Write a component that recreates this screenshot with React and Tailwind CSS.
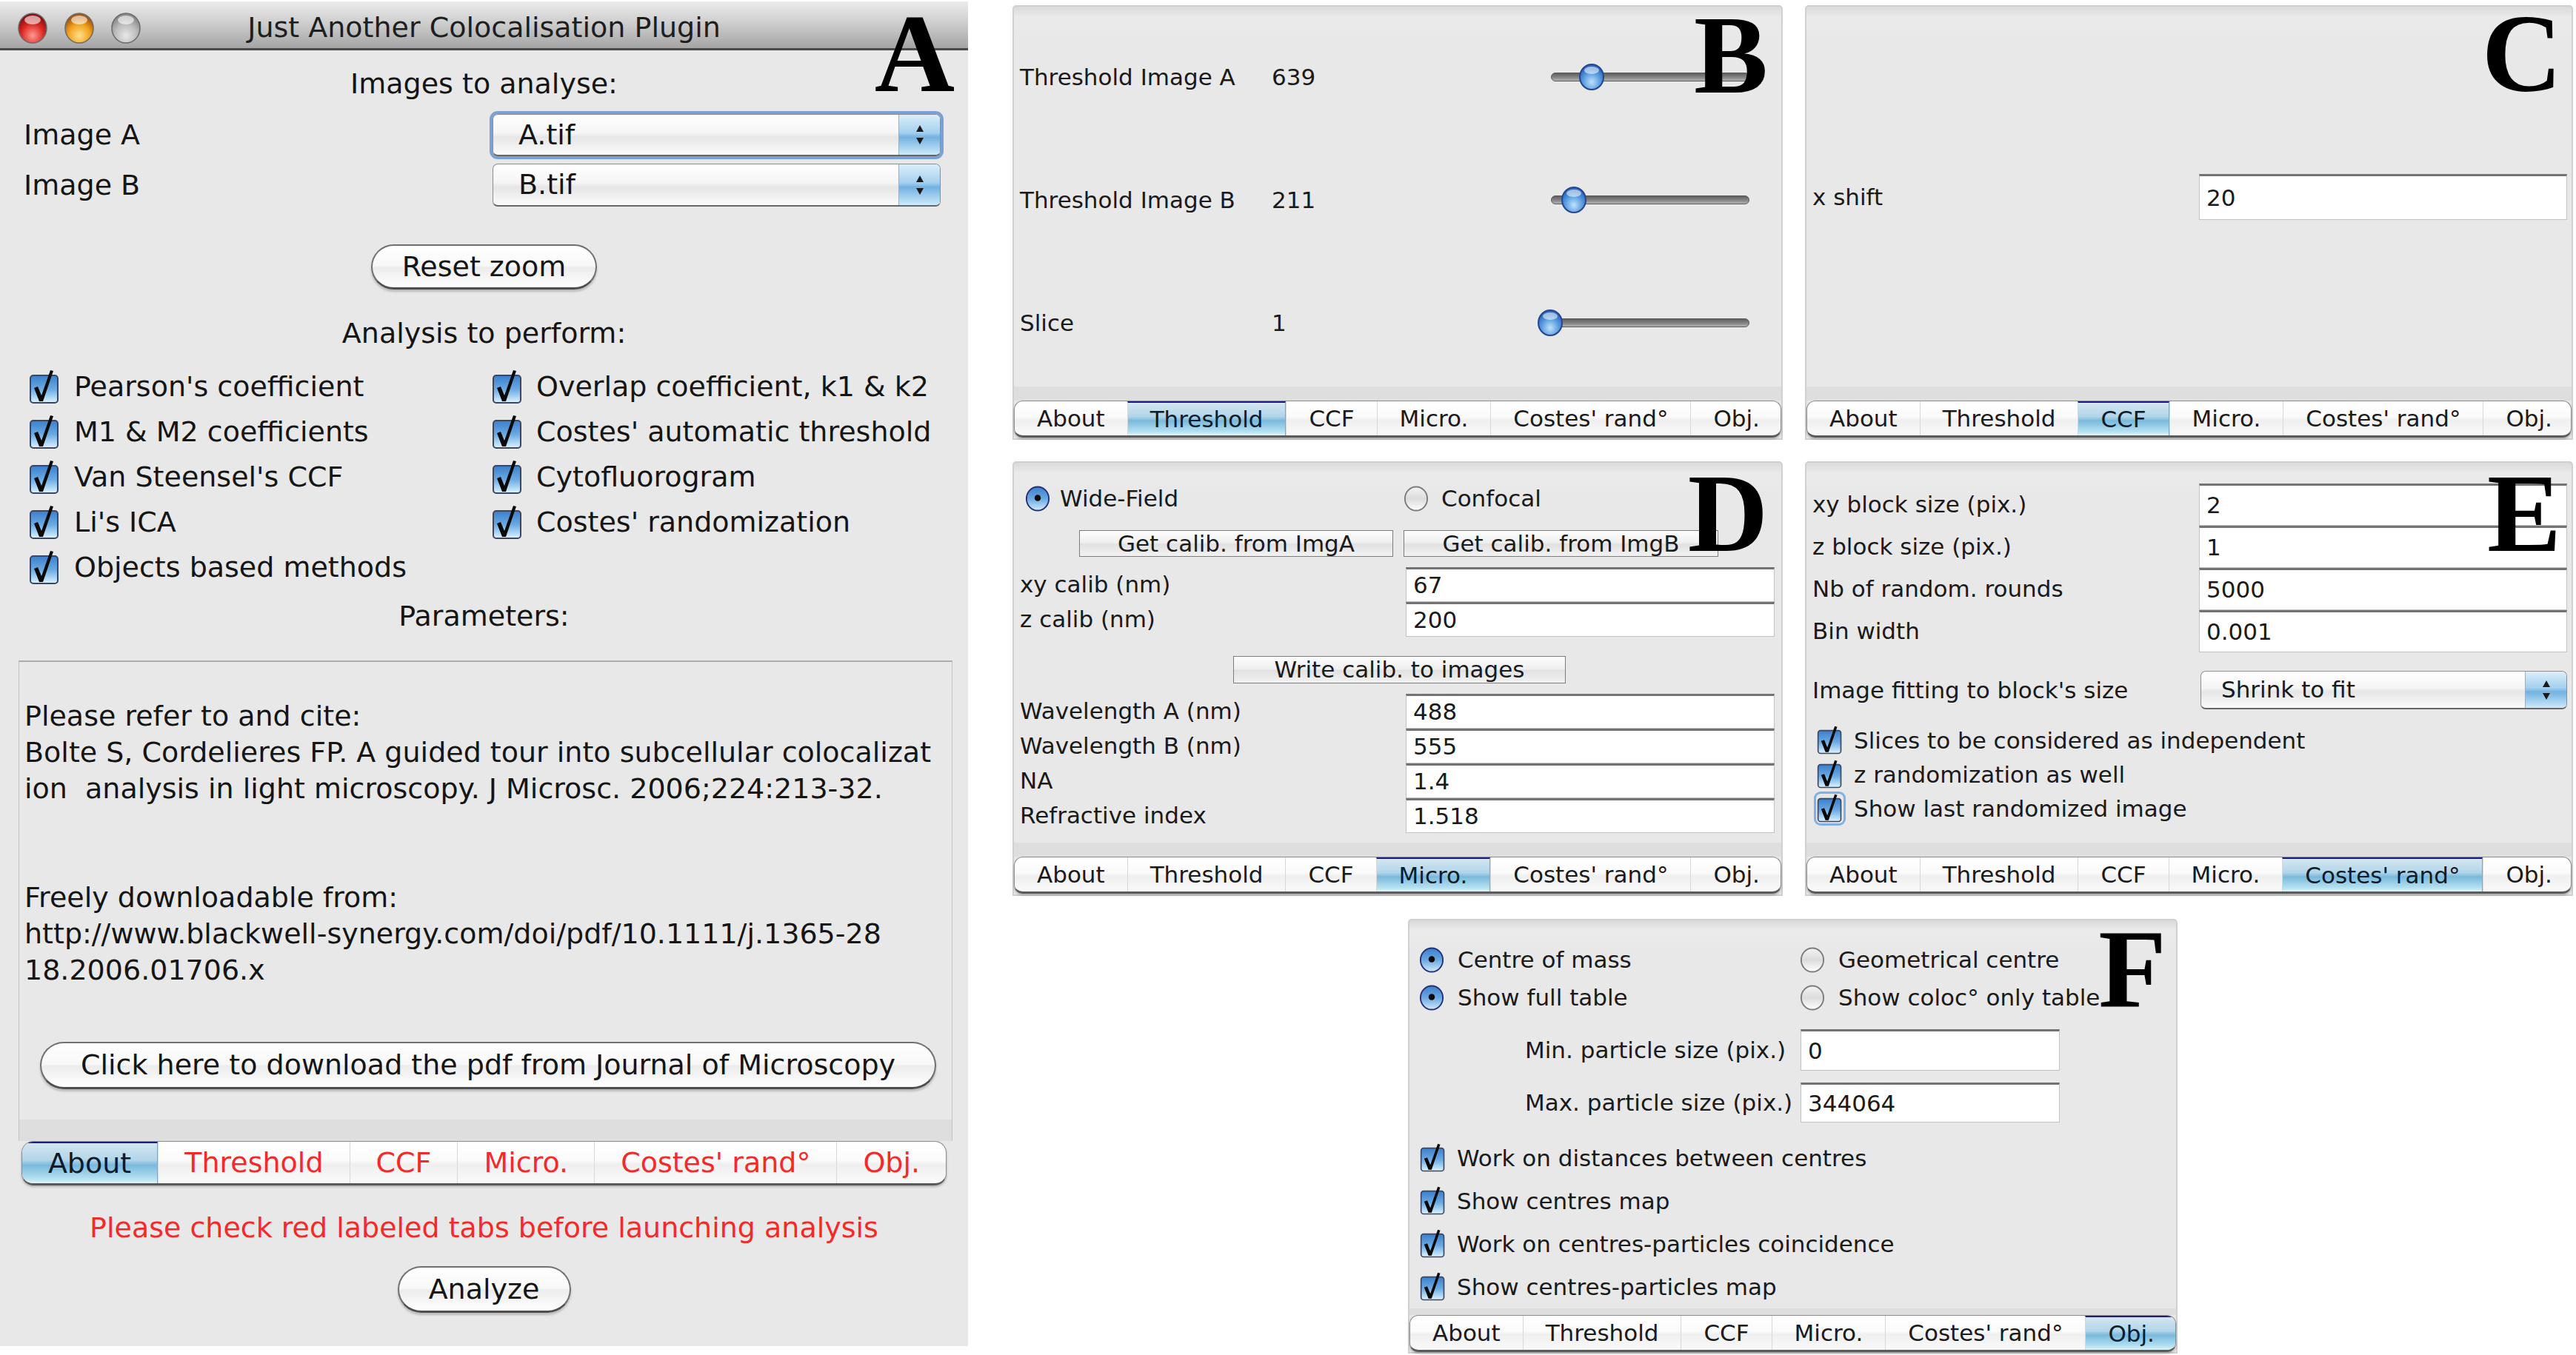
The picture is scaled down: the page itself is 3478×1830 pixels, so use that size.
import React from 'react';

const TABS = ['About', 'Threshold', 'CCF', 'Micro.', "Costes' rand°", 'Obj.'];

function TabBar({ active, big, red }) {
  return (
    <div
      className={`flex overflow-hidden whitespace-nowrap border border-[#8c8c8c] border-b-[3px] border-b-[#5a5a5a] bg-[linear-gradient(180deg,#ffffff_0%,#fbfbfb_45%,#efefef_55%,#fafafa_100%)] shadow-[0_2px_3px_rgba(0,0,0,0.25)] ${
        big ? 'h-[60px] rounded-[16px] text-[38px]' : 'h-[50px] rounded-[12px] text-[31px]'
      }`}
    >
      {TABS.map((t, i) => {
        const on = t === active;
        return (
          <div
            key={t}
            className={`flex shrink-0 items-center whitespace-nowrap ${big ? 'px-[35px]' : 'px-[30px]'} ${i > 0 ? 'border-l border-[#d8d8d8]' : ''} ${
              on
                ? 'border-t-2 border-t-[#1b1b86] border-r border-r-[#7fa9c6] bg-[linear-gradient(180deg,#d3e6f1_0%,#b2d5e9_42%,#79b9db_55%,#b4e0f1_88%,#dcf5f9_100%)] text-[#0d1b2a]'
                : red
                ? 'text-[#f42a2a]'
                : 'text-[#1a1a1a]'
            }`}
          >
            {t}
          </div>
        );
      })}
    </div>
  );
}

function Check({ className }) {
  return (
    <svg viewBox="0 0 44 48" className={className}>
      <defs>
        <linearGradient id="chk" x1="0" y1="0" x2="0" y2="1">
          <stop offset="0" stopColor="#3b7fcb" />
          <stop offset="0.5" stopColor="#6aa9e2" />
          <stop offset="0.85" stopColor="#b9def8" />
          <stop offset="1" stopColor="#e2f3fd" />
        </linearGradient>
      </defs>
      <rect x="3" y="8" width="37" height="37" rx="4" fill="url(#chk)" stroke="#3d4660" strokeWidth="2" />
      <path d="M8 25 L13 23 L18 35 L30 1 L34 2 L20 43 L15 43 Z" fill="#0a0a0a" />
    </svg>
  );
}

function Radio({ on, className }) {
  return (
    <svg viewBox="0 0 36 38" className={className}>
      <defs>
        <linearGradient id="radOn" x1="0" y1="0" x2="0" y2="1">
          <stop offset="0" stopColor="#3d7ecb" />
          <stop offset="0.5" stopColor="#6aa8e0" />
          <stop offset="1" stopColor="#d4ecfb" />
        </linearGradient>
        <linearGradient id="radOff" x1="0" y1="0" x2="0" y2="1">
          <stop offset="0" stopColor="#f4f4f4" />
          <stop offset="0.5" stopColor="#dcdcdc" />
          <stop offset="1" stopColor="#ffffff" />
        </linearGradient>
      </defs>
      <ellipse cx="18" cy="19" rx="16" ry="17" fill={on ? 'url(#radOn)' : 'url(#radOff)'} stroke={on ? '#23307a' : '#7c7c7c'} strokeWidth="2" />
      {on && <circle cx="18" cy="18" r="4.5" fill="#0a0a0a" />}
    </svg>
  );
}

function Thumb({ className }) {
  return (
    <svg viewBox="0 0 36 38" className={className}>
      <defs>
        <radialGradient id="thb" cx="0.5" cy="0.7" r="0.6">
          <stop offset="0" stopColor="#bfe2fb" />
          <stop offset="0.6" stopColor="#5a9ee0" />
          <stop offset="1" stopColor="#2d6cc0" />
        </radialGradient>
      </defs>
      <ellipse cx="18" cy="19" rx="16" ry="17" fill="url(#thb)" stroke="#28468f" strokeWidth="2" />
      <ellipse cx="18" cy="10" rx="10" ry="5" fill="#ffffff" opacity="0.55" />
    </svg>
  );
}

function Light({ c1, c2, c3 }) {
  return (
    <svg viewBox="0 0 42 44" className="w-[42px] h-[44px]">
      <defs>
        <radialGradient id={`l${c2.slice(1)}`} cx="0.5" cy="0.75" r="0.65">
          <stop offset="0" stopColor={c1} />
          <stop offset="0.6" stopColor={c2} />
          <stop offset="1" stopColor={c3} />
        </radialGradient>
      </defs>
      <ellipse cx="21" cy="22" rx="19" ry="20" fill={`url(#l${c2.slice(1)})`} stroke="#6a6a6a" strokeWidth="1.5" />
      <ellipse cx="21" cy="11" rx="11" ry="6" fill="#ffffff" opacity="0.6" />
    </svg>
  );
}

function Popup({ text, focus, className, pad }) {
  return (
    <div
      className={`flex items-stretch rounded-[7px] border border-[#8e8e8e] border-b-2 border-b-[#666666] overflow-hidden bg-[linear-gradient(180deg,#ffffff_0%,#f5f5f5_45%,#e6e6e6_56%,#fbfbfb_100%)] ${
        focus ? 'ring-[4px] ring-[#7aa1d6]' : ''
      } ${className}`}
    >
      <span className={`flex-1 flex items-center ${pad}`}>{text}</span>
      <div className="w-[56px] flex items-center justify-center border-l border-[#8fb2cf] bg-[linear-gradient(180deg,#dbeef9_0%,#a4d0ef_45%,#72b2e1_56%,#cde9f9_100%)]">
        <svg viewBox="0 0 14 30" className="w-[14px] h-[30px]">
          <path d="M7 2 L12 11 L2 11 Z" fill="#1a1a1a" />
          <path d="M2 19 L12 19 L7 28 Z" fill="#1a1a1a" />
        </svg>
      </div>
    </div>
  );
}

function Field({ value, className }) {
  return (
    <div className={`bg-white border border-[#c2c2c2] border-t-[3px] border-t-[#737373] flex items-center pl-[9px] ${className}`}>
      {value}
    </div>
  );
}

function Pill({ children, className }) {
  return (
    <div
      className={`rounded-full border-2 border-[#707070] border-b-[3px] border-b-[#4e4e4e] bg-[linear-gradient(180deg,#ffffff_0%,#f8f8f8_48%,#ececec_52%,#ffffff_100%)] shadow-[0_3px_3px_rgba(0,0,0,0.2)] flex items-center justify-center whitespace-nowrap text-[38px] ${className}`}
    >
      {children}
    </div>
  );
}

function SqButton({ children, className }) {
  return (
    <div
      className={`border border-[#7d7d7d] bg-[linear-gradient(180deg,#fdfdfd_0%,#efefef_48%,#e1e1e1_52%,#f2f2f2_100%)] flex items-center justify-center whitespace-nowrap ${className}`}
    >
      {children}
    </div>
  );
}

function Letter({ children, className }) {
  return (
    <span className={`absolute font-['Liberation_Serif',serif] font-bold text-[150px] leading-[0.75] text-black ${className}`}>
      {children}
    </span>
  );
}

function Panel({ width, active, letter, letterPos, children }) {
  return (
    <div className={`relative ${width} h-[587px] flex flex-col border-2 border-[#d0d0d0] rounded-t-[5px] bg-[linear-gradient(180deg,#d9d9d9_0px,#ebebeb_14px,#e8e8e8_40px)] text-[31px] text-[#1a1a1a] whitespace-nowrap`}>
      <div className="flex-1 flex flex-col">{children}</div>
      <div className="h-[19px] bg-[#dedede]" />
      <div className="h-[51px] flex justify-center items-start">
        <TabBar active={active} />
      </div>
      <Letter className={letterPos}>{letter}</Letter>
    </div>
  );
}

const PARAM_LINES = [
  ' ',
  'Please refer to and cite:',
  'Bolte S, Cordelieres FP. A guided tour into subcellular colocalizat',
  'ion  analysis in light microscopy. J Microsc. 2006;224:213-32.',
  ' ',
  ' ',
  'Freely downloadable from:',
  'http://www.blackwell-synergy.com/doi/pdf/10.1111/j.1365-28',
  '18.2006.01706.x',
];

function PanelA() {
  const left = ["Pearson's coefficient", 'M1 & M2 coefficients', "Van Steensel's CCF", "Li's ICA", 'Objects based methods'];
  const right = ['Overlap coefficient, k1 & k2', "Costes' automatic threshold", 'Cytofluorogram', "Costes' randomization"];
  return (
    <div className="relative w-[1307px] h-[1816px] mt-[2px] bg-[#e8e8e8] flex flex-col text-[38px] text-[#151515] whitespace-nowrap">
      <div className="relative h-[66px] pt-[7px] flex items-center justify-center bg-[linear-gradient(180deg,#ebebeb_0%,#cbcbcb_50%,#a4a4a4_100%)] border-b-[3px] border-[#4a4a4a]">
        <div className="absolute left-[23px] top-[14px] flex gap-[21px]">
          <Light c1="#ff9a90" c2="#dd2a25" c3="#8c1010" />
          <Light c1="#ffe08a" c2="#f0a21c" c3="#a8580a" />
          <Light c1="#e8e8e8" c2="#bcbcbc" c3="#8c8c8c" />
        </div>
        <span className="text-[#1e1e1e]">Just Another Colocalisation Plugin</span>
      </div>

      <div className="mt-[22px] leading-[46px] text-center">Images to analyse:</div>

      <div className="mt-[18px] h-[57px] flex items-center pl-[32px]">
        <span className="w-[633px]">Image A</span>
        <Popup text="A.tif" focus className="w-[605px] h-[57px]" pad="pl-[34px]" />
      </div>
      <div className="mt-[10px] h-[58px] flex items-center pl-[32px]">
        <span className="w-[633px]">Image B</span>
        <Popup text="B.tif" className="w-[605px] h-[58px]" pad="pl-[34px]" />
      </div>

      <Pill className="mt-[51px] self-center w-[305px] h-[61px]">Reset zoom</Pill>

      <div className="mt-[36px] leading-[46px] text-center">Analysis to perform:</div>

      <div className="mt-[19px] grid grid-cols-[625px_1fr] pl-[38px]">
        {left.map((l, i) => (
          <React.Fragment key={l}>
            <div className="h-[61px] flex items-center gap-[18px]">
              <Check className="w-[44px] h-[48px]" />
              <span>{l}</span>
            </div>
            <div className="h-[61px] flex items-center gap-[17px]">
              {right[i] && (
                <>
                  <Check className="w-[44px] h-[48px]" />
                  <span>{right[i]}</span>
                </>
              )}
            </div>
          </React.Fragment>
        ))}
      </div>

      <div className="mt-[12px] leading-[46px] text-center">Parameters:</div>

      <div className="mt-[37px] ml-[25px] w-[1261px] h-[649px] flex flex-col border-x border-[#c4c4c4] border-t-2 border-t-[#acacac] overflow-hidden">
        <div className="pl-[7px] leading-[49px] whitespace-pre">
          {PARAM_LINES.map((l, i) => (
            <div key={i}>{l}</div>
          ))}
        </div>
        <Pill className="mt-[72px] ml-[28px] w-[1210px] h-[64px]">
          Click here to download the pdf from Journal of Microscopy
        </Pill>
        <div className="mt-auto h-[29px] bg-[#dedede]" />
      </div>

      <div className="h-[60px] flex justify-center">
        <TabBar active="About" big red />
      </div>

      <div className="mt-[34px] leading-[46px] text-center text-[#f42a2a]">
        Please check red labeled tabs before launching analysis
      </div>

      <Pill className="mt-[29px] self-center w-[234px] h-[63px]">Analyze</Pill>

      <Letter className="right-[18px] top-[14px]">A</Letter>
    </div>
  );
}

function PanelB() {
  const rows = [
    ['Threshold Image A', '639', 'left-[36px]'],
    ['Threshold Image B', '211', 'left-[12px]'],
    ['Slice', '1', 'left-[-20px]'],
  ];
  return (
    <Panel width="w-[1040px]" active="Threshold" letter="B" letterPos="right-[18px] top-[9px]">
      <div className="flex flex-col pt-[65px] gap-[106px]">
        {rows.map(([l, v, pos]) => (
          <div key={l} className="h-[60px] flex items-center pl-[8px]">
            <span className="w-[340px]">{l}</span>
            <span>{v}</span>
            <div className="ml-auto mr-[43px] relative w-[268px] h-[12px] rounded-full border border-[#5a5a5a] bg-[linear-gradient(180deg,#5e5e5e_0%,#8a8a8a_60%,#b4b4b4_100%)]">
              <Thumb className={`absolute top-[-14px] w-[36px] h-[38px] ${pos}`} />
            </div>
          </div>
        ))}
      </div>
    </Panel>
  );
}

function PanelC() {
  return (
    <Panel width="w-[1037px]" active="CCF" letter="C" letterPos="right-[13px] top-[7px]">
      <div className="pt-[226px] pl-[8px] pr-[6px] flex items-center">
        <span className="w-[522px]">x shift</span>
        <Field value="20" className="flex-1 h-[62px]" />
      </div>
    </Panel>
  );
}

function PanelD() {
  const top = [
    ['xy calib (nm)', '67'],
    ['z calib (nm)', '200'],
  ];
  const bottom = [
    ['Wavelength A (nm)', '488'],
    ['Wavelength B (nm)', '555'],
    ['NA', '1.4'],
    ['Refractive index', '1.518'],
  ];
  const row = ([l, v]) => (
    <div key={l} className="h-[47px] flex items-center pl-[8px] pr-[9px]">
      <span className="w-[521px]">{l}</span>
      <Field value={v} className="flex-1 h-[47px]" />
    </div>
  );
  return (
    <Panel width="w-[1040px]" active="Micro." letter="D" letterPos="right-[18px] top-[12px]">
      <div className="pt-[25px] h-[65px] grid grid-cols-[511px_1fr] items-center pl-[15px]">
        <div className="flex items-center gap-[13px]">
          <Radio on className="w-[34px] h-[37px]" />
          <span>Wide-Field</span>
        </div>
        <div className="flex items-center gap-[17px]">
          <Radio className="w-[34px] h-[37px]" />
          <span>Confocal</span>
        </div>
      </div>
      <div className="mt-[26px] flex pl-[88px] gap-[14px]">
        <SqButton className="w-[424px] h-[36px]">Get calib. from ImgA</SqButton>
        <SqButton className="w-[425px] h-[36px]">Get calib. from ImgB</SqButton>
      </div>
      <div className="mt-[14px] flex flex-col">{top.map(row)}</div>
      <SqButton className="mt-[26px] ml-[296px] w-[449px] h-[37px]">Write calib. to images</SqButton>
      <div className="mt-[14px] flex flex-col">{bottom.map(row)}</div>
    </Panel>
  );
}

function PanelE() {
  const fields = [
    ['xy block size (pix.)', '2'],
    ['z block size (pix.)', '1'],
    ['Nb of random. rounds', '5000'],
    ['Bin width', '0.001'],
  ];
  const checks = ['Slices to be considered as independent', 'z randomization as well', 'Show last randomized image'];
  return (
    <Panel width="w-[1037px]" active="Costes' rand°" letter="E" letterPos="right-[14px] top-[12px]">
      <div className="pt-[28px] flex flex-col">
        {fields.map(([l, v]) => (
          <div key={l} className="h-[57px] flex items-center pl-[8px] pr-[6px]">
            <span className="w-[522px]">{l}</span>
            <Field value={v} className="flex-1 h-[57px]" />
          </div>
        ))}
      </div>
      <div className="mt-[25px] h-[52px] flex items-center pl-[8px] pr-[6px]">
        <span className="w-[524px]">Image fitting to block's size</span>
        <Popup text="Shrink to fit" className="flex-1 h-[52px]" pad="pl-[27px]" />
      </div>
      <div className="mt-[19px] flex flex-col pl-[13px]">
        {checks.map((c, i) => (
          <div key={c} className="h-[46px] flex items-center gap-[14px]">
            <Check className={`w-[37px] h-[40px] ${i === 2 ? 'rounded-[6px] shadow-[0_0_0_3px_#7fb0e6]' : ''}`} />
            <span>{c}</span>
          </div>
        ))}
      </div>
    </Panel>
  );
}

function PanelF() {
  const checks = [
    'Work on distances between centres',
    'Show centres map',
    'Work on centres-particles coincidence',
    'Show centres-particles map',
  ];
  return (
    <Panel width="w-[1039px]" active="Obj." letter="F" letterPos="right-[13px] top-[9px]">
      <div className="pt-[28px] grid grid-cols-[514px_1fr] pl-[13px]">
        {[
          ['Centre of mass', true],
          ['Geometrical centre', false],
          ['Show full table', true],
          ['Show coloc° only table', false],
        ].map(([t, on]) => (
          <div key={t} className="h-[51px] flex items-center gap-[18px]">
            <Radio on={on} className="w-[34px] h-[37px]" />
            <span>{t}</span>
          </div>
        ))}
      </div>
      <div className="mt-[17px] h-[56px] flex items-center pl-[156px]">
        <span className="w-[372px]">Min. particle size (pix.)</span>
        <Field value="0" className="w-[350px] h-[56px]" />
      </div>
      <div className="mt-[16px] h-[54px] flex items-center pl-[156px]">
        <span className="w-[372px]">Max. particle size (pix.)</span>
        <Field value="344064" className="w-[350px] h-[54px]" />
      </div>
      <div className="mt-[19px] flex flex-col pl-[13px]">
        {checks.map((c) => (
          <div key={c} className="h-[58px] flex items-center gap-[14px]">
            <Check className="w-[37px] h-[40px]" />
            <span>{c}</span>
          </div>
        ))}
      </div>
    </Panel>
  );
}

export default function App() {
  return (
    <div className="w-[3478px] h-[1830px] bg-white flex overflow-hidden font-['DejaVu_Sans',sans-serif]">
      <PanelA />
      <div className="ml-[60px] pt-[7px] flex flex-col">
        <div className="grid grid-cols-[1040px_1037px] gap-x-[30px] gap-y-[29px]">
          <PanelB />
          <PanelC />
          <PanelD />
          <PanelE />
        </div>
        <div className="mt-[31px] self-center">
          <PanelF />
        </div>
      </div>
    </div>
  );
}
